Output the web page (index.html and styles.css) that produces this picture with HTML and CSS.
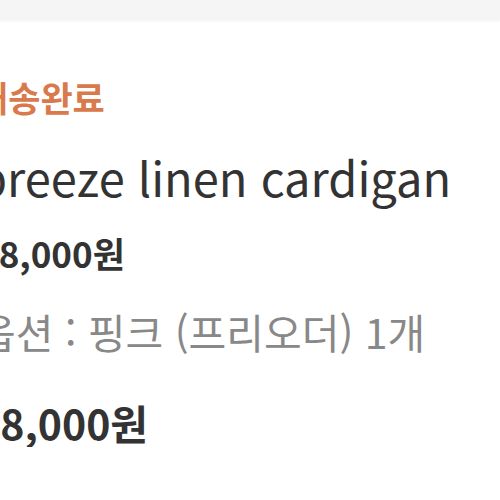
FILE: index.html
```html
<!DOCTYPE html>
<html lang="ko">
<head>
  <meta charset="UTF-8" />
  <meta name="viewport" content="width=device-width, initial-scale=1.0"/>
  <title>주문 상세</title>
  <link rel="stylesheet" href="styles.css">
</head>
<body>
  <div class="topbar"></div>
  <div class="order">
    <div class="status">배송완료</div>
    <div class="name">breeze linen cardigan</div>
    <div class="price">28,000원</div>
    <div class="option">옵션 : 핑크 (프리오더) 1개</div>
    <div class="total">28,000원</div>
  </div>
</body>
</html>
```

FILE: styles.css
```css
body {
  font-family: "Noto Sans CJK KR", "Noto Sans", sans-serif;
  background: #fff;
  margin: 0;
  padding: 0;
  overflow: hidden;
}
.topbar {
  height: 20px;
  background: #f5f5f5;
  box-shadow: 0 1px 3px rgba(0,0,0,0.06);
}
.order {
  margin-left: -22px;
  padding-top: 52px;
}
.status {
  color: #d97a4c;
  font-size: 35px;
  font-weight: bold;
  line-height: 50px;
  margin-left: -2px;
}
.name {
  color: #333;
  font-size: 47px;
  margin-top: 30px;
  line-height: 50px;
}
.price {
  color: #333;
  font-size: 35px;
  font-weight: bold;
  margin-top: 31px;
  line-height: 40px;
}
.option {
  color: #888;
  font-size: 41px;
  margin-top: 33px;
  line-height: 50px;
}
.total {
  color: #333;
  font-size: 41px;
  font-weight: bold;
  margin-top: 41px;
  line-height: 50px;
  margin-left: -2px;
}
```
